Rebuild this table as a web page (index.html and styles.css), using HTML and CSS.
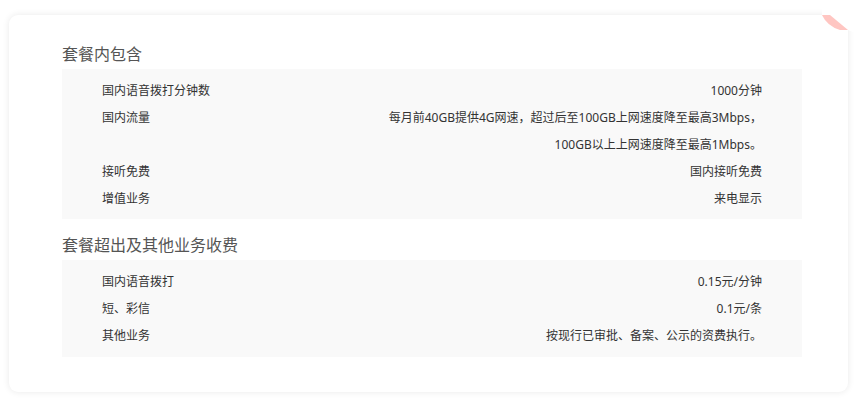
FILE: index.html
```html
<!DOCTYPE html>
<html lang="zh-CN">
<head>
<meta charset="utf-8">
<title>套餐详情</title>
<link rel="stylesheet" href="styles.css">
</head>
<body>
<div class="card">
  <svg class="fold" width="40" height="28" viewBox="0 0 40 28" aria-hidden="true">
    <polygon points="6,0 40,0 40,24 32,21 14,6 6,6" fill="#ffffff"/>
    <path d="M6,6 L14,6 L32,21 L24,21 Q11,17 6,6 Z" fill="#ffc6c2"/>
  </svg>

  <h2 class="sec-title">套餐内包含</h2>
  <div class="table">
    <div class="row"><span class="label">国内语音拨打分钟数</span><span class="value">1000分钟</span></div>
    <div class="row"><span class="label">国内流量</span><span class="value">每月前40GB提供4G网速，超过后至100GB上网速度降至最高3Mbps，<br>100GB以上上网速度降至最高1Mbps。</span></div>
    <div class="row"><span class="label">接听免费</span><span class="value">国内接听免费</span></div>
    <div class="row"><span class="label">增值业务</span><span class="value">来电显示</span></div>
  </div>

  <h2 class="sec-title sec-gap">套餐超出及其他业务收费</h2>
  <div class="table">
    <div class="row"><span class="label">国内语音拨打</span><span class="value">0.15元/分钟</span></div>
    <div class="row"><span class="label">短、彩信</span><span class="value">0.1元/条</span></div>
    <div class="row"><span class="label">其他业务</span><span class="value">按现行已审批、备案、公示的资费执行。</span></div>
  </div>
</div>
</body>
</html>
```

FILE: styles.css
```css
* { box-sizing: border-box; }

html, body {
  margin: 0;
  background: #ffffff;
}

body {
  padding: 15px 7px 14px 9px;
  font-family: "Microsoft YaHei", "Noto Sans", "Noto Sans CJK SC", sans-serif;
}

.card {
  position: relative;
  width: 839px;
  height: 377px;
  background: #ffffff;
  border-radius: 9px;
  box-shadow: 0 0 7px rgba(0, 0, 0, 0.09);
  padding: 24px 46px 35px 53px;
}

.fold {
  position: absolute;
  top: -6px;
  right: -8px;
  display: block;
}

.sec-title {
  margin: 0;
  height: 30px;
  line-height: 30px;
  font-size: 16px;
  font-weight: normal;
  color: #555555;
}

.sec-gap {
  margin-top: 11px;
}

.table {
  background: #f9f9f9;
  padding: 8px 40px 7px 40px;
  font-size: 12px;
  line-height: 27px;
  color: #333333;
}

.table + .sec-title + .table {
  padding-bottom: 8px;
}

.row {
  display: flex;
  justify-content: space-between;
  align-items: flex-start;
}

.label {
  white-space: nowrap;
}

.value {
  text-align: right;
}
```
